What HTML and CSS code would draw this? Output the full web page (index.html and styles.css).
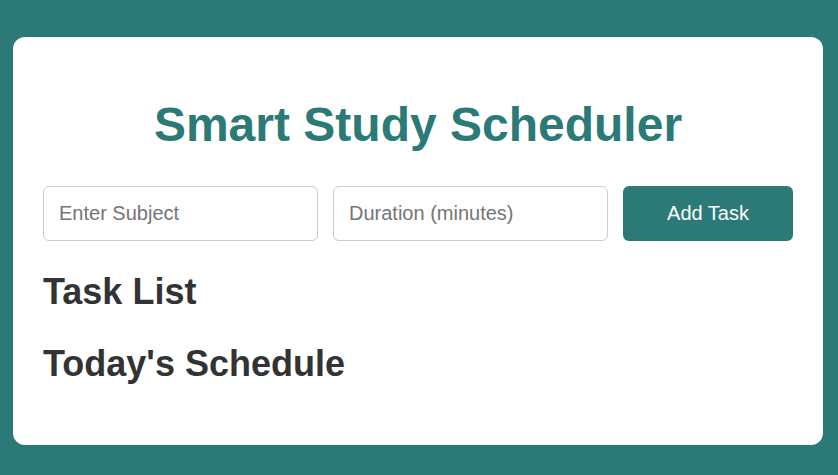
FILE: index.html
```html
<!DOCTYPE html>
<html lang="en">
<head>
<meta charset="utf-8">
<title>Smart Study Scheduler</title>
<link rel="stylesheet" href="styles.css">
</head>
<body>
  <main class="card">
    <h1 class="title">Smart Study Scheduler</h1>
    <div class="form-row">
      <input class="field" type="text" placeholder="Enter Subject">
      <input class="field" type="number" placeholder="Duration (minutes)">
      <button class="add-btn" type="button">Add Task</button>
    </div>
    <h2 class="section-title">Task List</h2>
    <ul class="task-list"></ul>
    <h2 class="section-title">Today's Schedule</h2>
    <div class="schedule"></div>
  </main>
</body>
</html>
```
FILE: styles.css
```css
html, body {
  margin: 0;
  padding: 0;
}
body {
  background: #2b7a78;
  font-family: "Liberation Sans", Arial, sans-serif;
  padding: 37px 15px 0 13px;
  min-height: 100vh;
  box-sizing: border-box;
}
.card {
  display: block;
  max-width: 810px;
  box-sizing: border-box;
  background: #ffffff;
  border-radius: 12px;
  padding: 30px;
}
.title {
  margin: 30px 0 34px;
  text-align: center;
  font-size: 48px;
  font-weight: bold;
  color: #2b7a78;
}
.form-row {
  display: flex;
  gap: 15px;
}
.field {
  flex: 1;
  min-width: 0;
  height: 55px;
  box-sizing: border-box;
  padding: 0 15px;
  border: 1px solid #cccccc;
  border-radius: 6px;
  font-family: "Liberation Sans", Arial, sans-serif;
  font-size: 20px;
  color: #333;
  background: #fff;
  -moz-appearance: textfield;
}
.field::-webkit-outer-spin-button,
.field::-webkit-inner-spin-button {
  -webkit-appearance: none;
  margin: 0;
}
.field::placeholder {
  color: #757575;
}
.add-btn {
  width: 170px;
  height: 55px;
  border: none;
  border-radius: 6px;
  background: #2b7a78;
  color: #ffffff;
  font-family: "Liberation Sans", Arial, sans-serif;
  font-size: 20px;
  cursor: pointer;
}
.section-title {
  margin: 30px 0;
  font-size: 36px;
  font-weight: bold;
  color: #333333;
}
.task-list {
  margin: 0;
  padding: 0;
  list-style: none;
}
.schedule {
  margin: 0;
}
```
